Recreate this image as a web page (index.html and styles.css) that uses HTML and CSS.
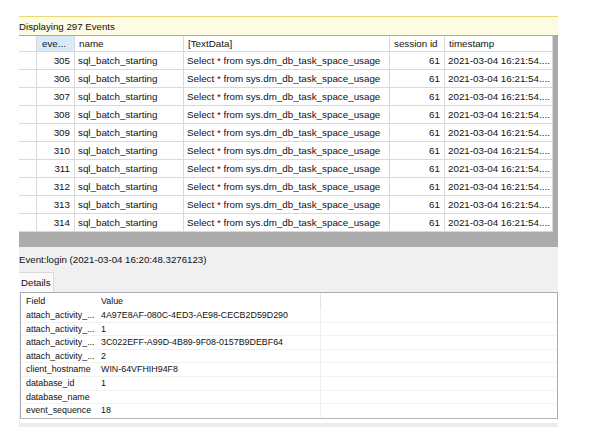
FILE: index.html
```html
<!DOCTYPE html>
<html lang="en">
<head>
  <meta charset="UTF-8" />
  <title>Event Viewer</title>
  <link rel="stylesheet" href="styles.css">
</head>
<body>
  <div class="viewer">
    <div class="infobar"><span>Displaying 297 Events</span></div>

    <div class="grid">
      <div class="row head">
        <div class="cell"></div>
        <div class="cell sorted">eve...</div>
        <div class="cell">name</div>
        <div class="cell">[TextData]</div>
        <div class="cell">session id</div>
        <div class="cell">timestamp</div>
      </div>
      <div id="rows"></div>
    </div>

    <div class="detail-pane">
      <div class="event-title"><span>Event:login (2021-03-04 16:20:48.3276123)</span></div>
      <div class="tabs"><span class="tab">Details</span></div>
      <div class="fields">
        <div class="frow fhead">
          <div class="fcell">Field</div>
          <div class="fcell">Value</div>
          <div class="fcell"></div>
        </div>
        <div id="field-rows"></div>
      </div>
      <div class="hscroll"></div>
    </div>
  </div>

  <script>
    const rowsEl = document.getElementById('rows');
    for (let seq = 305; seq <= 314; seq++) {
      const row = document.createElement('div');
      row.className = 'row';
      row.innerHTML =
        '<div class="cell"></div>' +
        '<div class="cell num">' + seq + '</div>' +
        '<div class="cell">sql_batch_starting</div>' +
        '<div class="cell">Select * from sys.dm_db_task_space_usage</div>' +
        '<div class="cell num">61</div>' +
        '<div class="cell">2021-03-04 16:21:54....</div>';
      rowsEl.appendChild(row);
    }

    const fields = [
      ['attach_activity_...', '4A97E8AF-080C-4ED3-AE98-CECB2D59D290'],
      ['attach_activity_...', '1'],
      ['attach_activity_...', '3C022EFF-A99D-4B89-9F08-0157B9DEBF64'],
      ['attach_activity_...', '2'],
      ['client_hostname', 'WIN-64VFHIH94F8'],
      ['database_id', '1'],
      ['database_name', ''],
      ['event_sequence', '18']
    ];
    const fieldsEl = document.getElementById('field-rows');
    fields.forEach(([name, value]) => {
      const row = document.createElement('div');
      row.className = 'frow';
      row.innerHTML =
        '<div class="fcell">' + name + '</div>' +
        '<div class="fcell">' + value + '</div>' +
        '<div class="fcell"></div>';
      fieldsEl.appendChild(row);
    });
  </script>
</body>
</html>
```

FILE: styles.css
```css
body {
  margin: 0;
  background: #ffffff;
  font-family: "Liberation Sans", Arial, sans-serif;
  color: #111111;
}

.viewer {
  width: 539px;
  margin: 16px 0 0 19px;
  overflow: hidden;
}

.infobar {
  height: 18px;
  line-height: 19px;
  border-top: 1px solid #e8d879;
  background: #fdfbe1;
  font-size: 9.7px;
  white-space: nowrap;
}

/* event grid */
.grid {
  height: 211px;
  border-top: 1px solid #a9a9a9;
  background: #ababab;
  font-size: 9.8px;
}

.row {
  display: grid;
  grid-template-columns: 18px 38px 109px 206px 55px 108px;
  height: 18px;
  width: 534px;
  background: #ffffff;
}

.row.head {
  height: 16px;
}

.cell {
  box-sizing: border-box;
  border-right: 1px solid #d9d9d9;
  border-bottom: 1px solid #d9d9d9;
  padding: 0 3px;
  line-height: 17px;
  white-space: nowrap;
  overflow: hidden;
}

.head .cell {
  line-height: 15px;
  padding-left: 4px;
}

.head .sorted {
  background: #d9ebf9;
  padding-left: 5px;
}

.cell.num {
  text-align: right;
  padding-right: 4px;
}

/* detail pane */
.detail-pane {
  background: #f0f0f0;
}

.event-title {
  height: 24px;
  line-height: 25px;
  font-size: 9.7px;
  white-space: nowrap;
}

.tabs {
  height: 21px;
  display: flex;
  align-items: flex-end;
}

.tab {
  box-sizing: border-box;
  width: 35px;
  height: 20px;
  padding-left: 2px;
  line-height: 19px;
  font-size: 9.7px;
  background: #fafafa;
  border-top: 1px solid #dadada;
  border-right: 1px solid #dadada;
}

.fields {
  margin-left: 1px;
  border: 1px solid #acacb6;
  border-bottom-color: #b4b4be;
  background: #ffffff;
  font-size: 8.9px;
}

.frow {
  display: grid;
  grid-template-columns: 76px 224px 1fr;
  height: 13.6px;
}

.frow.fhead {
  height: 16px;
}

.fcell {
  line-height: 13.6px;
  padding-left: 5px;
  white-space: nowrap;
  overflow: hidden;
  border-bottom: 1px solid #f2f2f2;
  box-sizing: border-box;
}

.fcell:nth-child(2) {
  padding-left: 4px;
  border-right: 1px solid #f0f0f0;
}

.fhead .fcell {
  line-height: 17px;
  border-bottom: none;
}

.fhead .fcell:nth-child(2) {
  border-right-color: #e2e2e2;
}

.frow:last-child .fcell {
  border-bottom: none;
}

.hscroll {
  height: 4px;
  margin-left: 1px;
  background: #ececec;
  border-top: 4px solid #ffffff;
}
```
